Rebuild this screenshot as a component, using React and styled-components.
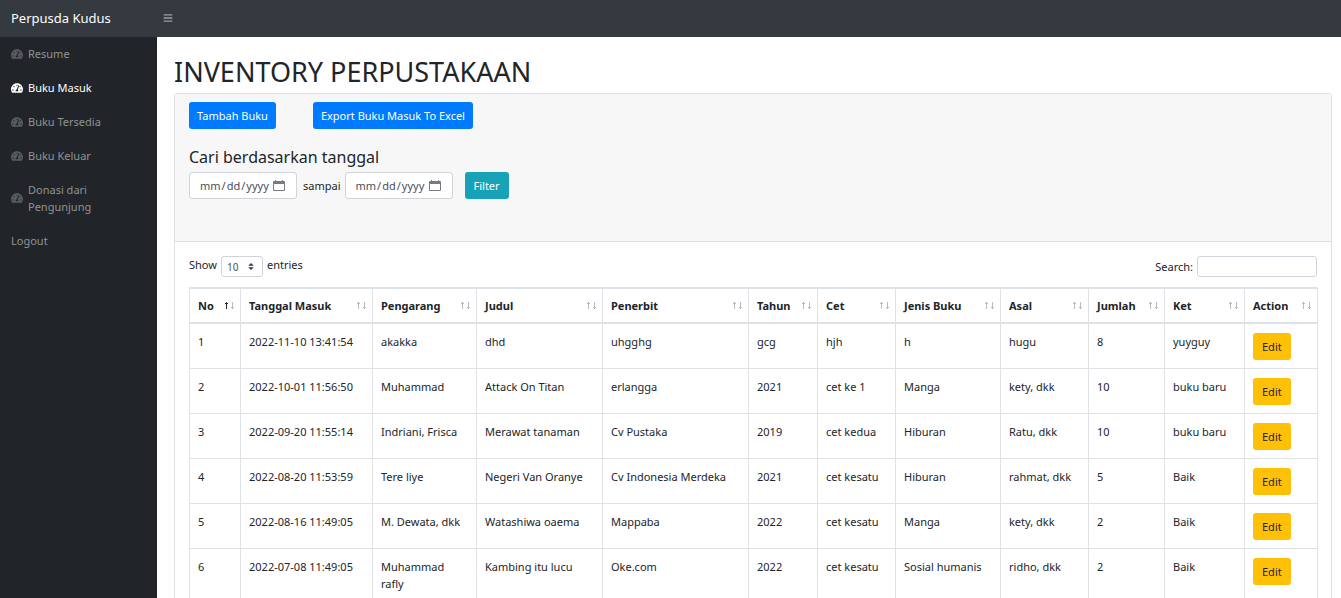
import React from "react";
import styled, { createGlobalStyle, css } from "styled-components";
import { FaTachometerAlt, FaBars } from "react-icons/fa";

const GlobalStyle = createGlobalStyle`
  *, *::before, *::after { box-sizing: border-box; }
  body {
    margin: 0;
    background: #fff;
    color: #212529;
    font-family: "Noto Sans", "Open Sans", sans-serif;
    font-size: 11px;
    line-height: 17px;
  }
  button, input, select { font-family: inherit; }
`;

const Shell = styled.div`
  display: flex;
  flex-direction: column;
  height: 100vh;
`;

const TopBar = styled.header`
  display: flex;
  flex: none;
  align-items: center;
  height: 37px;
  padding-bottom: 1px;
  background: #343a40;
`;

const Brand = styled.a`
  width: 157px;
  padding: 0 11px;
  color: #fff;
  font-size: 13px;
  line-height: 20px;
  text-decoration: none;
`;

const MenuToggle = styled.button`
  display: flex;
  padding: 6px;
  border: 0;
  background: none;
  color: #9a9da0;
  font-size: 10px;
`;

const Body = styled.div`
  display: flex;
  flex: 1;
  min-height: 0;
`;

const SideNav = styled.nav`
  display: flex;
  flex: none;
  flex-direction: column;
  gap: 1px;
  width: 157px;
  background: #212529;
`;

const NavItem = styled.a`
  display: flex;
  align-items: center;
  gap: 5px;
  padding: 8px 11px;
  color: ${(p) => (p.$active ? "#fff" : "#909294")};
  text-decoration: none;

  svg {
    flex: none;
    color: ${(p) => (p.$active ? "#fff" : "#595c5f")};
    font-size: 12px;
  }
`;

const Main = styled.main`
  flex: 1;
  min-width: 0;
  padding: 18px 9px 17px 17px;
  overflow-y: auto;
  scrollbar-width: none;
`;

const Title = styled.h1`
  margin: 0 0 4px;
  font-size: 27px;
  font-weight: 400;
  line-height: 34px;
`;

const Card = styled.section`
  border: 1px solid #dfdfdf;
  border-radius: 3px;
`;

const CardHeader = styled.div`
  height: 148px;
  padding: 8px 14px;
  border-bottom: 1px solid #dfdfdf;
  background: #f7f7f7;
`;

const CardBody = styled.div`
  padding: 14px;
`;

const Actions = styled.div`
  display: flex;
  gap: 37px;
`;

const tones = {
  primary: css`
    padding: 0 8px;
    background: #007bff;
    color: #fff;
  `,
  info: css`
    background: #17a2b8;
    color: #fff;
  `,
  warning: css`
    background: #ffc107;
    color: #212529;
  `,
};

const Button = styled.button`
  display: block;
  height: 27px;
  padding: 0 9px;
  border: 0;
  border-radius: 3px;
  font-size: 11px;
  line-height: 17px;
  white-space: nowrap;
  ${(p) => tones[p.$tone]}
`;

const FilterTitle = styled.h5`
  margin: 18px 0 5px;
  font-size: 16px;
  font-weight: 400;
  line-height: 20px;
`;

const FilterForm = styled.form`
  display: flex;
  align-items: center;

  ${Button} {
    margin-left: 12px;
  }
`;

const DateBox = styled.span`
  display: grid;
  grid-template-columns: 100%;
  align-items: center;
  width: 108px;
  height: 27px;

  input,
  svg {
    grid-area: 1 / 1;
  }

  svg {
    justify-self: end;
    margin-right: 12px;
    pointer-events: none;
  }
`;

const DateInput = styled.input`
  width: 100%;
  min-width: 0;
  height: 27px;
  padding: 4px 8px 4px 10px;
  border: 1px solid #ced4da;
  border-radius: 3px;
  background: #fff;
  color: #495057;
  font-size: 11px;

  &::-webkit-datetime-edit-month-field,
  &::-webkit-datetime-edit-day-field,
  &::-webkit-datetime-edit-year-field {
    padding: 0;
  }

  &::-webkit-datetime-edit-text {
    padding: 0 1px;
  }

  &::-webkit-calendar-picker-indicator {
    width: 12px;
    margin: 0;
    padding: 0;
    opacity: 0;
  }
`;

const Between = styled.label`
  padding: 0 4px 0 6px;
`;

const Controls = styled.div`
  display: flex;
  justify-content: space-between;
  margin-bottom: 10px;
`;

const Control = styled.label`
  display: flex;
  align-items: ${(p) => p.$align};
  gap: 4px;
`;

const SelectBox = styled.span`
  display: grid;
  align-items: center;
  width: 42px;
  height: 21px;

  select,
  svg {
    grid-area: 1 / 1;
  }

  svg {
    justify-self: end;
    margin-right: 9px;
    pointer-events: none;
  }
`;

const Select = styled.select`
  width: 100%;
  height: 21px;
  padding: 0 5px;
  appearance: none;
  border: 1px solid #ced4da;
  border-radius: 3px;
  background: #fff;
  color: #495057;
  font-size: 10px;
`;

const SearchInput = styled.input`
  width: 120px;
  height: 21px;
  padding: 2px 5px;
  border: 1px solid #ced4da;
  border-radius: 3px;
  font-size: 10px;
`;

const Table = styled.table`
  width: 100%;
  table-layout: fixed;
  border-collapse: separate;
  border-spacing: 0;
  border-top: 1px solid #dee2e6;
  border-left: 1px solid #dee2e6;
`;

const HeadCell = styled.th`
  width: ${(p) => p.$width}px;
  height: 36px;
  padding: 0 5px 0 8px;
  border: solid #dee2e6;
  border-width: 1px 1px 2px 0;
  text-align: left;
  font-weight: 700;
  white-space: nowrap;
`;

const HeadContent = styled.div`
  display: flex;
  align-items: center;
  justify-content: space-between;
`;

const Cell = styled.td`
  height: 45px;
  padding: 9px 8px 8px;
  border: solid #dee2e6;
  border-width: 0 1px 1px 0;
  vertical-align: top;
`;

const columns = [
  ["No", 51],
  ["Tanggal Masuk", 132],
  ["Pengarang", 104],
  ["Judul", 126],
  ["Penerbit", 146],
  ["Tahun", 69],
  ["Cet", 78],
  ["Jenis Buku", 105],
  ["Asal", 88],
  ["Jumlah", 76],
  ["Ket", 80],
  ["Action", 73],
];

const rows = [
  ["1", "2022-11-10 13:41:54", "akakka", "dhd", "uhgghg", "gcg", "hjh", "h", "hugu", "8", "yuyguy"],
  ["2", "2022-10-01 11:56:50", "Muhammad", "Attack On Titan", "erlangga", "2021", "cet ke 1", "Manga", "kety, dkk", "10", "buku baru"],
  ["3", "2022-09-20 11:55:14", "Indriani, Frisca", "Merawat tanaman", "Cv Pustaka", "2019", "cet kedua", "Hiburan", "Ratu, dkk", "10", "buku baru"],
  ["4", "2022-08-20 11:53:59", "Tere liye", "Negeri Van Oranye", "Cv Indonesia Merdeka", "2021", "cet kesatu", "Hiburan", "rahmat, dkk", "5", "Baik"],
  ["5", "2022-08-16 11:49:05", "M. Dewata, dkk", "Watashiwa oaema", "Mappaba", "2022", "cet kesatu", "Manga", "kety, dkk", "2", "Baik"],
  ["6", "2022-07-08 11:49:05", "Muhammad rafly", "Kambing itu lucu", "Oke.com", "2022", "cet kesatu", "Sosial humanis", "ridho, dkk", "2", "Baik"],
];

const navItems = ["Resume", "Buku Masuk", "Buku Tersedia", "Buku Keluar", "Donasi dari Pengunjung"];

function SortArrows({ ascending }) {
  return (
    <svg width="11" height="9" viewBox="0 0 11 9" fill="none" stroke="#212529" aria-hidden="true">
      <path d="M2.5 8V1.5M1 3l1.5-1.5L4 3" opacity={ascending ? 1 : 0.3} />
      <path d="M8.5 1v6.5M7 6l1.5 1.5L10 6" opacity="0.3" />
    </svg>
  );
}

function DateField(props) {
  return (
    <DateBox>
      <DateInput type="date" {...props} />
      <svg width="12" height="11" viewBox="0 0 12 11" fill="#777b7f" aria-hidden="true">
        <path d="M2 0h1v1h6V0h1v1h1a1 1 0 0 1 1 1v8a1 1 0 0 1-1 1H1a1 1 0 0 1-1-1V2a1 1 0 0 1 1-1h1zM1 4v6h10V4z" fillRule="evenodd" />
      </svg>
    </DateBox>
  );
}

export default function App() {
  return (
    <Shell>
      <GlobalStyle />
      <TopBar>
        <Brand href="#">Perpusda Kudus</Brand>
        <MenuToggle type="button" aria-label="Toggle menu">
          <FaBars />
        </MenuToggle>
      </TopBar>
      <Body>
        <SideNav>
          {navItems.map((label) => (
            <NavItem key={label} href="#" $active={label === "Buku Masuk"}>
              <FaTachometerAlt />
              <span>{label}</span>
            </NavItem>
          ))}
          <NavItem href="#">Logout</NavItem>
        </SideNav>
        <Main>
          <Title>INVENTORY PERPUSTAKAAN</Title>
          <Card>
            <CardHeader>
              <Actions>
                <Button type="button" $tone="primary">Tambah Buku</Button>
                <Button type="button" $tone="primary">Export Buku Masuk To Excel</Button>
              </Actions>
              <FilterTitle>Cari berdasarkan tanggal</FilterTitle>
              <FilterForm>
                <DateField aria-label="Dari tanggal" />
                <Between htmlFor="until">sampai</Between>
                <DateField id="until" />
                <Button type="button" $tone="info">Filter</Button>
              </FilterForm>
            </CardHeader>
            <CardBody>
              <Controls>
                <Control $align="flex-start">
                  Show
                  <SelectBox>
                    <Select defaultValue="10">
                      <option>10</option>
                      <option>25</option>
                      <option>50</option>
                      <option>100</option>
                    </Select>
                    <svg width="6" height="7" viewBox="0 0 4 5" fill="#343a40" aria-hidden="true">
                      <path d="M2 0 0 2h4zm0 5L0 3h4z" />
                    </svg>
                  </SelectBox>
                  entries
                </Control>
                <Control $align="center">
                  Search:
                  <SearchInput type="search" />
                </Control>
              </Controls>
              <Table>
                <thead>
                  <tr>
                    {columns.map(([label, width]) => (
                      <HeadCell key={label} $width={width} scope="col">
                        <HeadContent>
                          {label}
                          <SortArrows ascending={label === "No"} />
                        </HeadContent>
                      </HeadCell>
                    ))}
                  </tr>
                </thead>
                <tbody>
                  {rows.map((row) => (
                    <tr key={row[0]}>
                      {row.map((value, i) => (
                        <Cell key={i}>{value}</Cell>
                      ))}
                      <Cell>
                        <Button type="button" $tone="warning">Edit</Button>
                      </Cell>
                    </tr>
                  ))}
                </tbody>
              </Table>
            </CardBody>
          </Card>
        </Main>
      </Body>
    </Shell>
  );
}
